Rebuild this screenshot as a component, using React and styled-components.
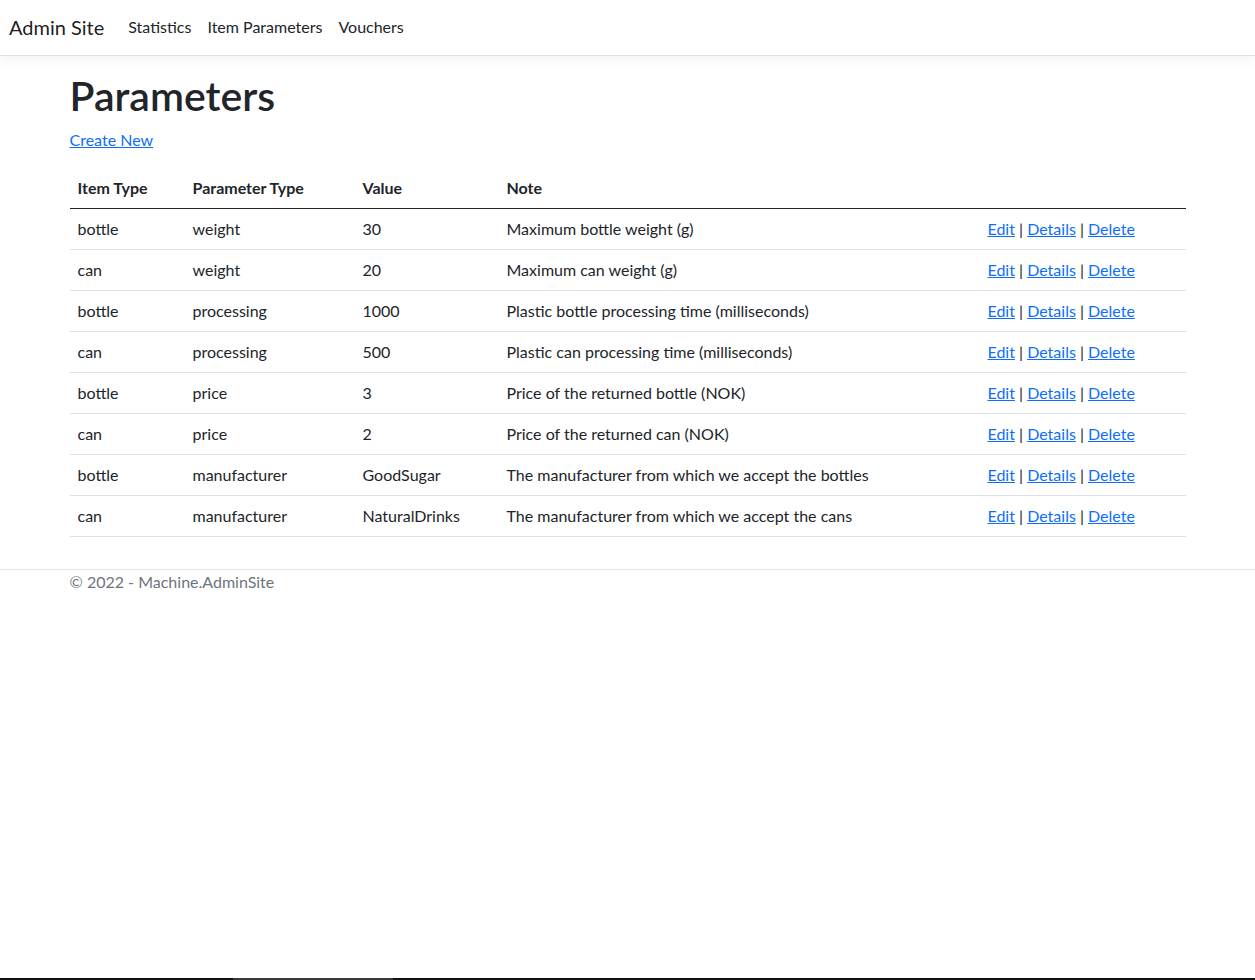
import styled, { createGlobalStyle } from "styled-components";

const GlobalStyle = createGlobalStyle`
  html, body {
    margin: 0;
    padding: 0;
    background: #fff;
  }
  body {
    font-family: "Segoe UI", Lato, "Noto Sans", sans-serif;
    font-size: 16px;
    line-height: 1.5;
    color: #212529;
  }
  * {
    box-sizing: border-box;
  }
`;

const Navbar = styled.nav`
  display: flex;
  align-items: center;
  height: 56px;
  padding: 7px 12px 9px 9px;
  border-bottom: 1px solid #dee2e6;
  box-shadow: 0 4px 12px rgba(0, 0, 0, 0.05);
  margin-bottom: 16px;
`;

const Brand = styled.a`
  font-size: 20px;
  color: rgba(0, 0, 0, 0.9);
  text-decoration: none;
  margin-right: 16px;
  padding: 5px 0;
`;

const NavList = styled.ul`
  display: flex;
  list-style: none;
  margin: 0;
  padding: 0;
`;

const NavLink = styled.a`
  display: block;
  padding: 8px;
  color: #212529;
  text-decoration: none;
`;

const Container = styled.div`
  width: 1140px;
  margin: 0 auto;
  padding: 0 12px;
`;

const Main = styled.main`
  padding-bottom: 16px;
`;

const Title = styled.h1`
  font-size: 41px;
  font-weight: 600;
  line-height: 48px;
  margin: 0 0 8px;
`;

const Link = styled.a`
  color: #0d6efd;
  text-decoration: underline;
  cursor: pointer;
`;

const Para = styled.p`
  margin: 0 0 16px;
`;

const Table = styled.table`
  width: 100%;
  border-collapse: collapse;
  margin-bottom: 16px;
  color: #212529;
`;

const Th = styled.th`
  text-align: left;
  font-weight: 700;
  padding: 8px;
  line-height: 24px;
  border-bottom: 1px solid #212529;
  width: ${(p) => p.$w}px;
`;

const Td = styled.td`
  padding: 8px;
  line-height: 24px;
  border-bottom: 1px solid #dee2e6;
  vertical-align: top;
`;

const Footer = styled.footer`
  border-top: 1px solid #e5e5e5;
  color: #6c757d;
  line-height: 24px;
`;

const TaskbarEdge = styled.div`
  position: fixed;
  left: 0;
  right: 0;
  bottom: 0;
  height: 2px;
  background: linear-gradient(
    to right,
    #111 0,
    #111 233px,
    #3a3a3a 233px,
    #3a3a3a 393px,
    #111 393px
  );
`;

const rows = [
  ["bottle", "weight", "30", "Maximum bottle weight (g)"],
  ["can", "weight", "20", "Maximum can weight (g)"],
  ["bottle", "processing", "1000", "Plastic bottle processing time (milliseconds)"],
  ["can", "processing", "500", "Plastic can processing time (milliseconds)"],
  ["bottle", "price", "3", "Price of the returned bottle (NOK)"],
  ["can", "price", "2", "Price of the returned can (NOK)"],
  ["bottle", "manufacturer", "GoodSugar", "The manufacturer from which we accept the bottles"],
  ["can", "manufacturer", "NaturalDrinks", "The manufacturer from which we accept the cans"],
];

export default function App() {
  return (
    <>
      <GlobalStyle />
      <header>
        <Navbar>
          <Brand>Admin Site</Brand>
          <NavList>
            <li>
              <NavLink>Statistics</NavLink>
            </li>
            <li>
              <NavLink>Item Parameters</NavLink>
            </li>
            <li>
              <NavLink>Vouchers</NavLink>
            </li>
          </NavList>
        </Navbar>
      </header>
      <Container>
        <Main>
          <Title>Parameters</Title>
          <Para>
            <Link>Create New</Link>
          </Para>
          <Table>
            <thead>
              <tr>
                <Th $w={115}>Item Type</Th>
                <Th $w={170}>Parameter Type</Th>
                <Th $w={144}>Value</Th>
                <Th $w={481}>Note</Th>
                <Th $w={206}></Th>
              </tr>
            </thead>
            <tbody>
              {rows.map((r, i) => (
                <tr key={i}>
                  <Td>{r[0]}</Td>
                  <Td>{r[1]}</Td>
                  <Td>{r[2]}</Td>
                  <Td>{r[3]}</Td>
                  <Td>
                    <Link>Edit</Link> | <Link>Details</Link> | <Link>Delete</Link>
                  </Td>
                </tr>
              ))}
            </tbody>
          </Table>
        </Main>
      </Container>
      <Footer>
        <Container>© 2022 - Machine.AdminSite</Container>
      </Footer>
      <TaskbarEdge />
    </>
  );
}
